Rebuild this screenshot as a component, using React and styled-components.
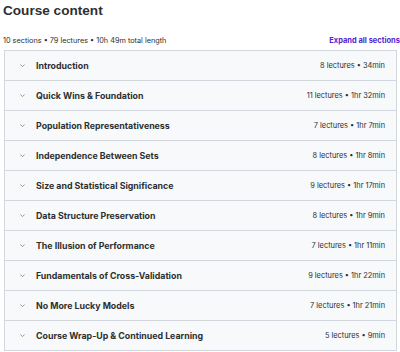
import React from "react";
import styled, { createGlobalStyle } from "styled-components";

const GlobalStyle = createGlobalStyle`
	html, body {
		margin: 0;
		padding: 0;
		background: #ffffff;
		font-family: Inter, "Noto Sans", sans-serif;
		color: #2d2f31;
	}
`;

const Wrapper = styled.div`
	width: 400px;
	padding: 1px 3px 0 4px;
	box-sizing: border-box;
`;

const Title = styled.h2`
	margin: 0;
	font-family: "Liberation Sans", Arial, sans-serif;
	font-size: 13.6px;
	font-weight: 700;
	line-height: 20px;
	color: #2d2f31;
	margin-left: -1px;
`;

const MetaBar = styled.div`
	display: flex;
	justify-content: space-between;
	align-items: center;
	margin-top: 9px;
	margin-right: -3px;
	height: 20px;
`;

const Summary = styled.span`
	font-size: 7.3px;
	color: #2d2f31;
	margin-left: -1px;
`;

const ExpandLink = styled.span`
	font-size: 7.5px;
	font-weight: 700;
	color: #5624d0;
`;

const Accordion = styled.div`
	border: 1px solid #d1d7dc;
`;

const Row = styled.div`
	display: flex;
	align-items: center;
	height: 29px;
	padding: 0 11px 0 14px;
	background: #f7f9fa;
	& + & {
		border-top: 1px solid #d1d7dc;
	}
`;

const Chevron = styled.svg`
	width: 7px;
	height: 7px;
	flex-shrink: 0;
	margin-right: 10px;
`;

const SectionName = styled.span`
	flex: 1;
	font-size: 8.8px;
	font-weight: 700;
	color: #2d2f31;
`;

const SectionMeta = styled.span`
	font-size: 7.4px;
	color: #2d2f31;
`;

const sections = [
	["Introduction", "8 lectures • 34min"],
	["Quick Wins & Foundation", "11 lectures • 1hr 32min"],
	["Population Representativeness", "7 lectures • 1hr 7min"],
	["Independence Between Sets", "8 lectures • 1hr 8min"],
	["Size and Statistical Significance", "9 lectures • 1hr 17min"],
	["Data Structure Preservation", "8 lectures • 1hr 9min"],
	["The Illusion of Performance", "7 lectures • 1hr 11min"],
	["Fundamentals of Cross-Validation", "9 lectures • 1hr 22min"],
	["No More Lucky Models", "7 lectures • 1hr 21min"],
	["Course Wrap-Up & Continued Learning", "5 lectures • 9min"],
];

const App = () => {
	return (
		<>
			<GlobalStyle />
			<Wrapper>
				<Title>Course content</Title>
				<MetaBar>
					<Summary>10 sections • 79 lectures • 10h 49m total length</Summary>
					<ExpandLink>Expand all sections</ExpandLink>
				</MetaBar>
				<Accordion>
					{sections.map(([name, meta]) => (
						<Row key={name}>
							<Chevron viewBox="0 0 10 10">
								<path
									d="M2 3.8 L5 6.4 L8 3.8"
									fill="none"
									stroke="#6a6f73"
									strokeWidth="1"
								/>
							</Chevron>
							<SectionName>{name}</SectionName>
							<SectionMeta>{meta}</SectionMeta>
						</Row>
					))}
				</Accordion>
			</Wrapper>
		</>
	);
};

export default App;
